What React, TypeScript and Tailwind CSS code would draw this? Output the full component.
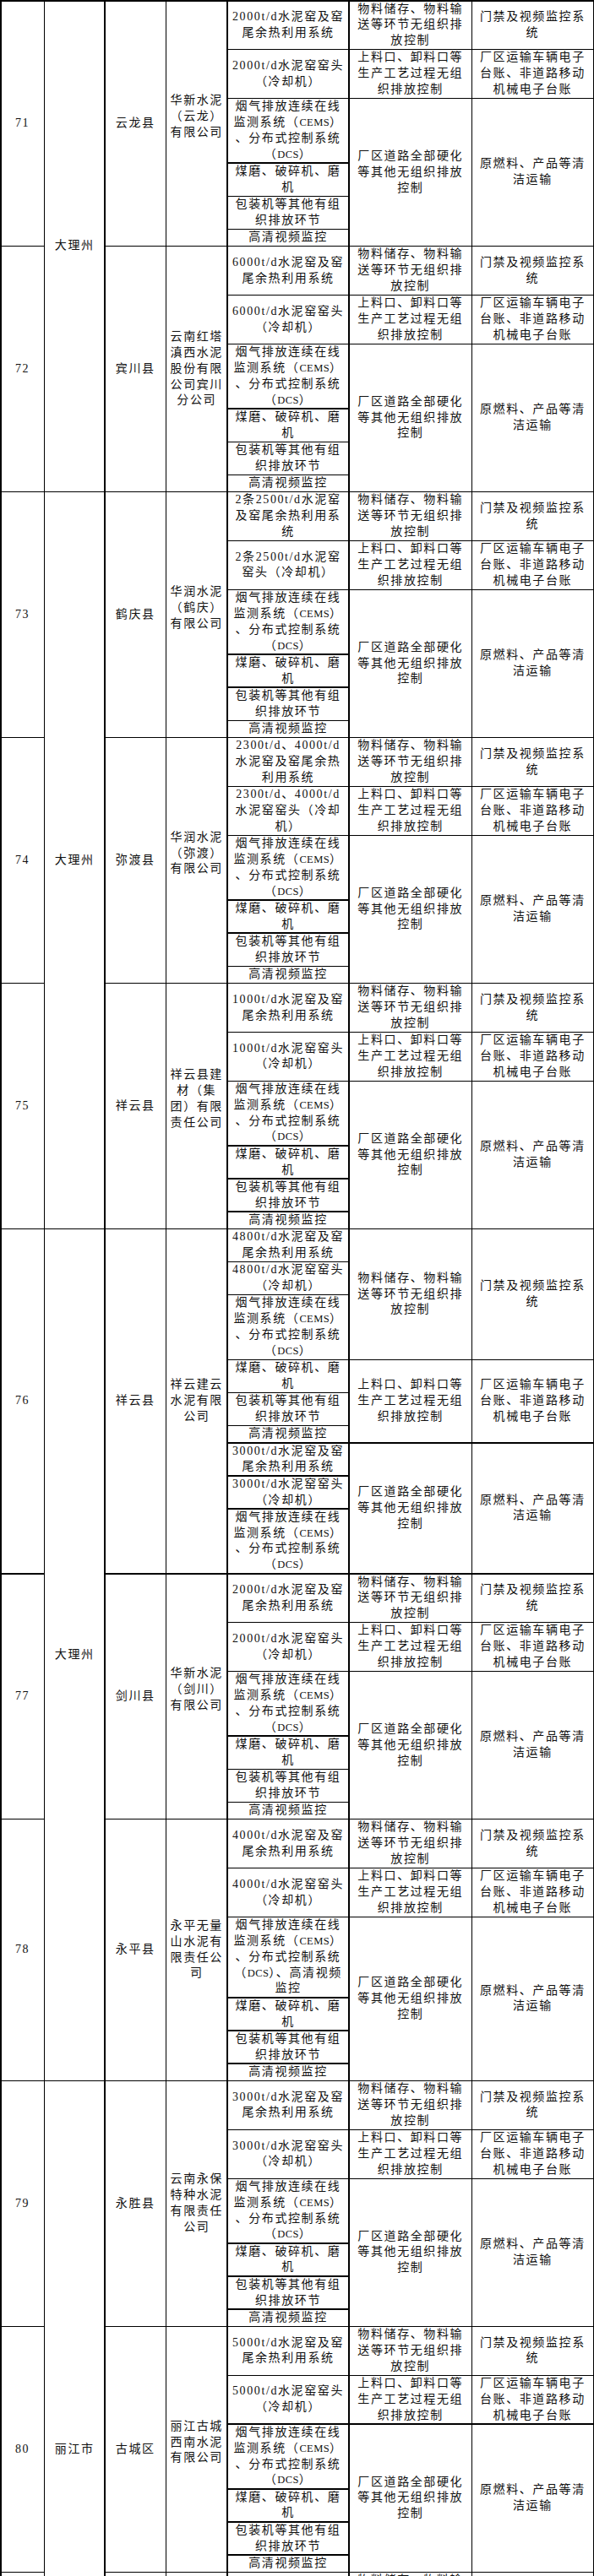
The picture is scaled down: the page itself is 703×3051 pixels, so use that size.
import React from 'react';

type Group = { span: number; c6: string[]; c7: string[] };
type Sub = { h: number; c5: string[]; g?: Group };
type Row = {
  num: string;
  county: string;
  company: string[];
  shift?: boolean;
  city?: { name: string; span: number };
  subs: Sub[];
};

const A6 = ['物料储存、物料输', '送等环节无组织排', '放控制'];
const A7 = ['门禁及视频监控系', '统'];
const B6 = ['上料口、卸料口等', '生产工艺过程无组', '织排放控制'];
const B7 = ['厂区运输车辆电子', '台账、非道路移动', '机械电子台账'];
const C6 = ['厂区道路全部硬化', '等其他无组织排放', '控制'];
const C7 = ['原燃料、产品等清', '洁运输'];
const CEMS = ['烟气排放连续在线', '监测系统（CEMS）', '、分布式控制系统', '（DCS）'];
const MILL = ['煤磨、破碎机、磨', '机'];
const PACK = ['包装机等其他有组', '织排放环节'];
const HD = ['高清视频监控'];

function stdSubs(kiln: string[], head: string[], cems: string[] = CEMS, cemsH = 4): Sub[] {
  return [
    { h: 3, c5: kiln, g: { span: 1, c6: A6, c7: A7 } },
    { h: 3, c5: head, g: { span: 1, c6: B6, c7: B7 } },
    { h: cemsH, c5: cems, g: { span: 4, c6: C6, c7: C7 } },
    { h: 2, c5: MILL },
    { h: 2, c5: PACK },
    { h: 1, c5: HD },
  ];
}

const kiln = (t: string) => [`${t}水泥窑及窑`, '尾余热利用系统'];
const head = (t: string) => [`${t}水泥窑窑头`, '（冷却机）'];

const rows: Row[] = [
  {
    num: '71', county: '云龙县', company: ['华新水泥', '（云龙）', '有限公司'], shift: true,
    city: { name: '大理州', span: 12 },
    subs: stdSubs(kiln('2000t/d'), head('2000t/d')),
  },
  {
    num: '72', county: '宾川县', company: ['云南红塔', '滇西水泥', '股份有限', '公司宾川', '分公司'],
    subs: stdSubs(kiln('6000t/d'), head('6000t/d')),
  },
  {
    num: '73', county: '鹤庆县', company: ['华润水泥', '（鹤庆）', '有限公司'], shift: true,
    city: { name: '大理州', span: 18 },
    subs: stdSubs(['2条2500t/d水泥窑', '及窑尾余热利用系', '统'], ['2条2500t/d水泥窑', '窑头（冷却机）']),
  },
  {
    num: '74', county: '弥渡县', company: ['华润水泥', '（弥渡）', '有限公司'], shift: true,
    subs: stdSubs(['2300t/d、4000t/d', '水泥窑及窑尾余热', '利用系统'], ['2300t/d、4000t/d', '水泥窑窑头（冷却', '机）']),
  },
  {
    num: '75', county: '祥云县', company: ['祥云县建', '材（集', '团）有限', '责任公司'], shift: true,
    subs: stdSubs(kiln('1000t/d'), head('1000t/d')),
  },
  {
    num: '76', county: '祥云县', company: ['祥云建云', '水泥有限', '公司'],
    city: { name: '大理州', span: 21 },
    subs: [
      { h: 2, c5: kiln('4800t/d'), g: { span: 3, c6: A6, c7: A7 } },
      { h: 2, c5: head('4800t/d') },
      { h: 4, c5: CEMS },
      { h: 2, c5: MILL, g: { span: 3, c6: B6, c7: B7 } },
      { h: 2, c5: PACK },
      { h: 1, c5: HD },
      { h: 2, c5: kiln('3000t/d'), g: { span: 3, c6: C6, c7: C7 } },
      { h: 2, c5: head('3000t/d') },
      { h: 4, c5: CEMS },
    ],
  },
  {
    num: '77', county: '剑川县', company: ['华新水泥', '（剑川）', '有限公司'], shift: true,
    subs: stdSubs(kiln('2000t/d'), head('2000t/d')),
  },
  {
    num: '78', county: '永平县', company: ['永平无量', '山水泥有', '限责任公', '司'],
    subs: stdSubs(kiln('4000t/d'), head('4000t/d'), ['烟气排放连续在线', '监测系统（CEMS）', '、分布式控制系统', '（DCS）、高清视频', '监控'], 5),
  },
  {
    num: '79', county: '永胜县', company: ['云南永保', '特种水泥', '有限责任', '公司'],
    city: { name: '丽江市', span: 14 },
    subs: stdSubs(kiln('3000t/d'), head('3000t/d')),
  },
  {
    num: '80', county: '古城区', company: ['丽江古城', '西南水泥', '有限公司'], shift: true,
    subs: stdSubs(kiln('5000t/d'), head('5000t/d')),
  },
  {
    num: '', county: '', company: [],
    subs: [
      { h: 3, c5: [], g: { span: 1, c6: A6, c7: [] } },
      { h: 12, c5: [], g: { span: 1, c6: [], c7: [] } },
    ],
  },
];

const SPAN: Record<number, string> = {
  1: 'row-span-1',
  2: 'row-span-2',
  3: 'row-span-3',
  4: 'row-span-4',
  6: 'row-span-6',
  9: 'row-span-9',
  12: 'row-span-12',
  14: 'row-span-14',
  18: 'row-span-18',
  21: 'row-span-21',
};

const H: Record<number, string> = {
  1: 'h-[18.8px]',
  2: 'h-[37.6px]',
  3: 'h-[56.4px]',
  4: 'h-[75.2px]',
  5: 'h-[94px]',
  12: 'h-[231.6px]',
};

function fmt(line: string) {
  const parts = line.split(/(CEMS|DCS)/);
  return parts.map((p, i) =>
    p === 'CEMS' || p === 'DCS' ? (
      <span key={i} className="text-[12.5px] tracking-[0.4px]">
        {p}
      </span>
    ) : (
      <React.Fragment key={i}>{p}</React.Fragment>
    )
  );
}

function Cell({ lines, className }: { lines: string[]; className: string }) {
  return (
    <div className={`flex min-w-0 items-center justify-center bg-white text-center ${className}`}>
      <div className="flex flex-col items-center">
        {lines.map((l, i) => (
          <span key={i} className="whitespace-nowrap">
            {fmt(l)}
          </span>
        ))}
      </div>
    </div>
  );
}

export default function App() {
  const items: React.ReactNode[] = [];
  rows.forEach((row, ri) => {
    const n = row.subs.length;
    row.subs.forEach((s, si) => {
      if (si === 0) {
        items.push(<Cell key={`n${ri}`} lines={row.num ? [row.num] : []} className={`col-start-1 ${SPAN[n]}`} />);
        if (row.city) {
          items.push(<Cell key={`c${ri}`} lines={[row.city.name]} className={`col-start-2 ${SPAN[row.city.span]}`} />);
        }
        items.push(<Cell key={`k${ri}`} lines={row.county ? [row.county] : []} className={`col-start-3 ${SPAN[n]}`} />);
        items.push(
          <Cell
            key={`m${ri}`}
            lines={row.company}
            className={`col-start-4 ${SPAN[n]} ${row.shift ? 'pb-[16px]' : ''}`}
          />
        );
      }
      items.push(<Cell key={`p${ri}-${si}`} lines={s.c5} className={`col-start-5 ${H[s.h]}`} />);
      if (s.g) {
        items.push(<Cell key={`x${ri}-${si}`} lines={s.g.c6} className={`col-start-6 ${SPAN[s.g.span]}`} />);
        items.push(<Cell key={`y${ri}-${si}`} lines={s.g.c7} className={`col-start-7 ${SPAN[s.g.span]}`} />);
      }
    });
  });

  return (
    <div className="h-[3051px] w-[703px] overflow-hidden bg-white">
      <div className="grid grid-cols-[50.25px_70px_71px_71px_142.5px_144px_142.25px] gap-[1.5px] bg-black p-[1.5px] font-['Liberation_Serif','Noto_Sans_CJK_SC',serif] text-[14px] leading-[18.8px] tracking-[1.6px] text-[#111111]">
        {items}
      </div>
    </div>
  );
}
